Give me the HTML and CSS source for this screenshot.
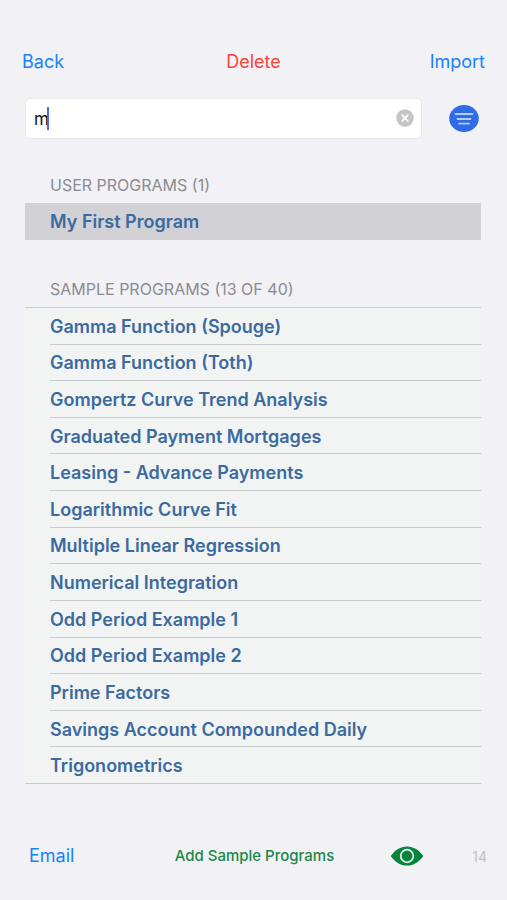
FILE: index.html
```html
<!DOCTYPE html>
<html lang="en">
<head>
<meta charset="utf-8">
<meta name="viewport" content="width=device-width, initial-scale=1">
<title>Programs</title>
<link rel="stylesheet" href="styles.css">
</head>
<body>
<div class="page">
  <header class="toolbar">
    <button class="link" type="button">Back</button>
    <button class="link danger" type="button">Delete</button>
    <button class="link end" type="button">Import</button>
  </header>
  <div class="search-row">
    <div class="search">
      <input class="search-input" type="text" value="m" aria-label="Search programs">
      <span class="caret"></span>
      <button class="clear" type="button" aria-label="Clear">
        <svg width="18" height="18" viewBox="0 0 18 18"><circle cx="9" cy="9" r="8.7" fill="#c5c5c7"/><path d="M6.200 6.200l5.600 5.600M11.800 6.200l-5.600 5.600" stroke="#fff" stroke-width="1.8" stroke-linecap="round"/></svg>
      </button>
    </div>
    <button class="filter" type="button" aria-label="Filter">
      <svg width="30" height="28" viewBox="0 0 30 28"><ellipse cx="15" cy="13.500" rx="14.8" ry="13.400" fill="#2f6ce8"/><path d="M6.5 9h17M8.5 14h13M10 18.600h10" stroke="#b4ccf8" stroke-width="1.8" stroke-linecap="round"/></svg>
    </button>
  </div>
  <main class="content">
    <h2 class="heading">USER PROGRAMS (1)</h2>
    <ul class="list selected">
      <li class="row"><a href="#">My First Program</a></li>
    </ul>
    <h2 class="heading">SAMPLE PROGRAMS (13 OF 40)</h2>
    <ul class="list samples">
      <li class="row"><a href="#">Gamma Function (Spouge)</a></li>
      <li class="row"><a href="#">Gamma Function (Toth)</a></li>
      <li class="row"><a href="#">Gompertz Curve Trend Analysis</a></li>
      <li class="row"><a href="#">Graduated Payment Mortgages</a></li>
      <li class="row"><a href="#">Leasing - Advance Payments</a></li>
      <li class="row"><a href="#">Logarithmic Curve Fit</a></li>
      <li class="row"><a href="#">Multiple Linear Regression</a></li>
      <li class="row"><a href="#">Numerical Integration</a></li>
      <li class="row"><a href="#">Odd Period Example 1</a></li>
      <li class="row"><a href="#">Odd Period Example 2</a></li>
      <li class="row"><a href="#">Prime Factors</a></li>
      <li class="row"><a href="#">Savings Account Compounded Daily</a></li>
      <li class="row"><a href="#">Trigonometrics</a></li>
    </ul>
  </main>
  <footer class="footer">
    <button class="link" type="button">Email</button>
    <button class="link add" type="button">Add Sample Programs</button>
    <button class="link eye" type="button" aria-label="Preview">
      <svg width="34" height="20" viewBox="0 0 34 20"><path d="M.7 10C5 3.800 10.500.4 17 .4S29 3.800 33.300 10C29 16.200 23.500 19.600 17 19.600S5 16.200.7 10z" fill="#06843e"/><circle cx="17" cy="10" r="6.300" fill="none" stroke="#e4f3ea" stroke-width="1.700"/></svg>
    </button>
    <span class="count">14</span>
  </footer>
</div>
</body>
</html>
```
FILE: styles.css
```css
* { box-sizing: border-box; }

body {
  margin: 0;
  background: #f1f1f6;
  font-family: Inter, "Liberation Sans", sans-serif;
}

.page {
  display: flex;
  flex-direction: column;
  min-height: 100vh;
}

button {
  padding: 0;
  border: 0;
  background: none;
  font: inherit;
}

svg { display: block; }

.toolbar {
  display: grid;
  grid-template-columns: 1fr auto 1fr;
  padding: 50px 22px 0;
}

.link {
  color: #1682fb;
  font-size: 18px;
  line-height: 24px;
  text-align: left;
}

.danger { color: #f9423a; }

.end { text-align: right; }

.search-row {
  display: flex;
  align-items: center;
  gap: 27px;
  padding: 24px 28px 0 25px;
}

.search {
  position: relative;
  flex: 1;
}

.search-input {
  display: block;
  width: 100%;
  height: 41px;
  padding: 0 32px 0 8px;
  border: 1px solid #e9e9ed;
  border-radius: 5px;
  outline: 0;
  background: #fff;
  color: #111;
  font: 17px Inter, "Liberation Sans", sans-serif;
}

.caret {
  position: absolute;
  top: 9px;
  left: 22px;
  width: 2px;
  height: 23px;
  background: #4a69e0;
}

.clear {
  position: absolute;
  top: 11px;
  right: 8px;
}

.content {
  display: flex;
  flex: 1;
  flex-direction: column;
  padding: 36px 26px 0 25px;
}

.heading {
  margin: 0;
  padding: 0 25px 8px;
  color: #8b8b90;
  font-size: 16px;
  font-weight: 400;
  line-height: 20px;
}

.list {
  margin: 0;
  padding: 0;
  list-style: none;
}

.row {
  display: flex;
  align-items: center;
  min-height: 36px;
  margin-left: 25px;
}

.row a {
  color: #3b6a9f;
  font-size: 18px;
  font-weight: 600;
  line-height: 24px;
  text-decoration: none;
}

.selected {
  margin-bottom: 39px;
  background: #d1d1d6;
}

.selected .row { min-height: 37px; }

.samples {
  display: grid;
  flex: 1;
  grid-auto-rows: 1fr;
  border-top: 1px solid #c9cccd;
  background: #f2f4f4;
}

.samples .row {
  padding-top: 2px;
  border-bottom: 1px solid #c9cccd;
}

.samples .row:last-child {
  margin-left: 0;
  padding-left: 25px;
}

.footer {
  display: flex;
  align-items: center;
  padding: 60px 20px 32px 29px;
}

.add {
  margin-left: auto;
  color: #1b8748;
  font-size: 15px;
  font-weight: 500;
}

.eye { margin: 0 48px 0 56px; }

.count {
  color: #c1c1c5;
  font-size: 14px;
}
```
